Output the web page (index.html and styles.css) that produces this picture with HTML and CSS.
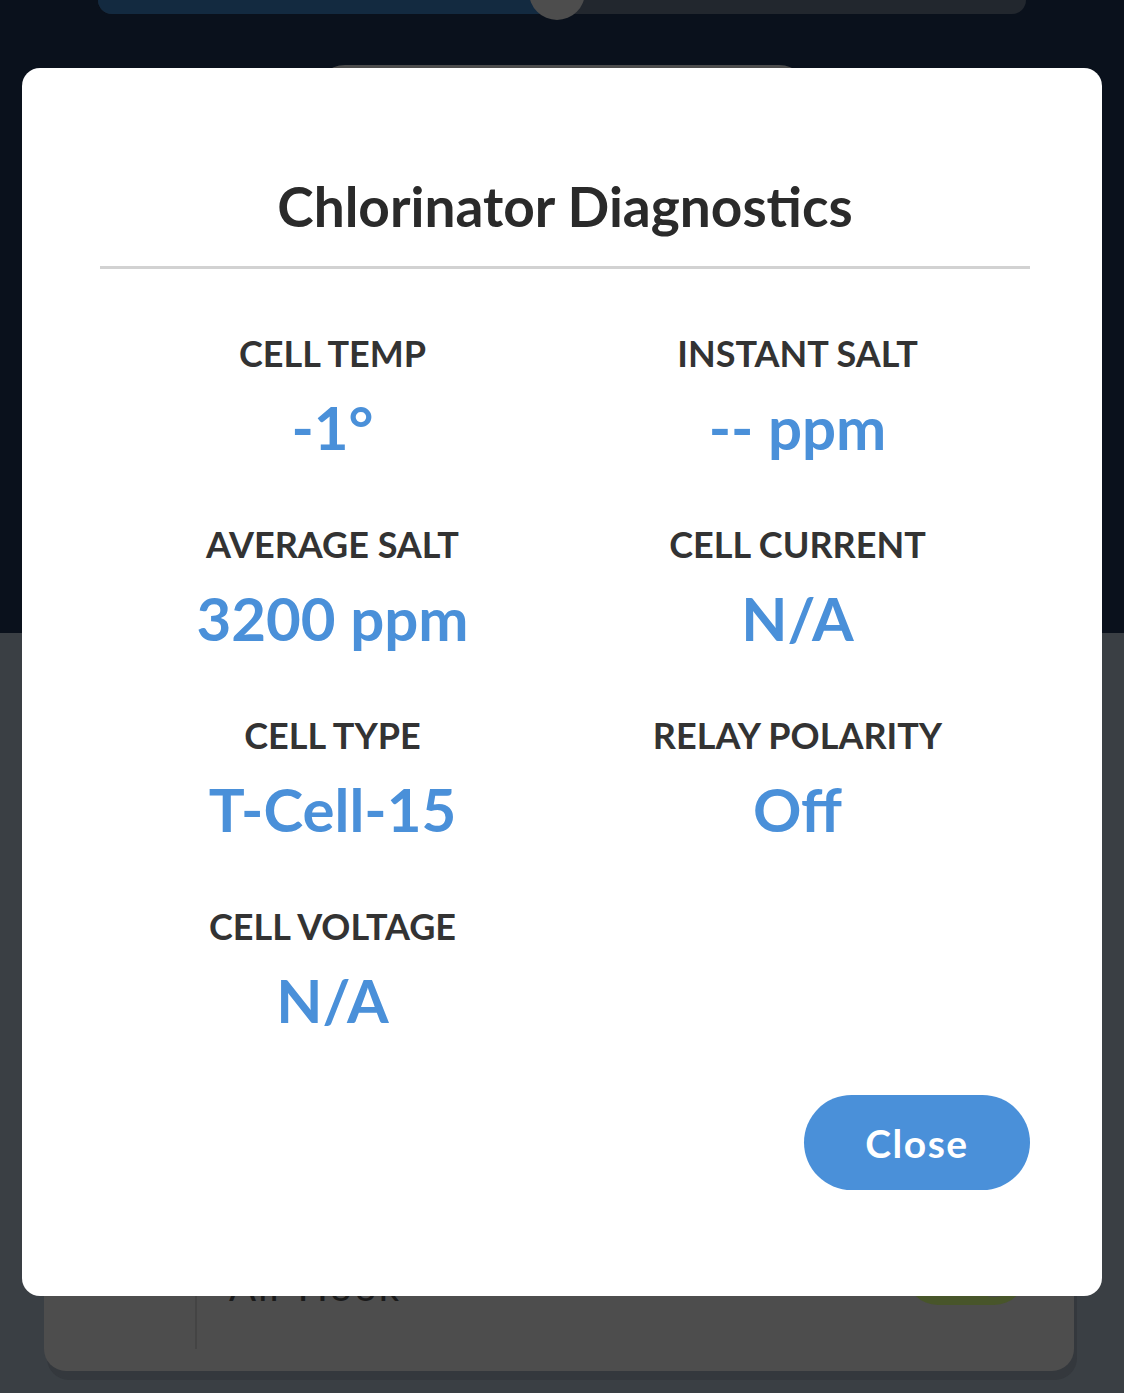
FILE: index.html
```html
<!DOCTYPE html>
<html>
<head>
<meta charset="utf-8">
<link rel="stylesheet" href="styles.css">
</head>
<body>
<div class="page">
  <section class="top">
    <div class="slider">
      <div class="slider-fill"></div>
      <div class="slider-knob"></div>
    </div>
    <div class="pill"></div>
  </section>
  <section class="bottom">
    <div class="card">
      <div class="card-side"></div>
      <div class="card-main">
        <div class="card-title">Air Hook</div>
        <div class="toggle"><span class="toggle-knob"></span></div>
      </div>
    </div>
  </section>
</div>

<div class="modal">
  <h1 class="modal-title">Chlorinator Diagnostics</h1>
  <div class="divider"></div>
  <div class="grid">
    <div class="cell"><div class="label">CELL TEMP</div><div class="value">-1°</div></div>
    <div class="cell"><div class="label">INSTANT SALT</div><div class="value">-- ppm</div></div>
    <div class="cell"><div class="label">AVERAGE SALT</div><div class="value">3200 ppm</div></div>
    <div class="cell"><div class="label">CELL CURRENT</div><div class="value">N/A</div></div>
    <div class="cell"><div class="label">CELL TYPE</div><div class="value">T-Cell-15</div></div>
    <div class="cell"><div class="label">RELAY POLARITY</div><div class="value">Off</div></div>
    <div class="cell"><div class="label">CELL VOLTAGE</div><div class="value">N/A</div></div>
  </div>
  <div class="actions">
    <button class="close-btn">Close</button>
  </div>
</div>
</body>
</html>
```
FILE: styles.css
```css
* { box-sizing: border-box; }
html, body {
  margin: 0;
  padding: 0;
}
body {
  width: 1124px;
  height: 1393px;
  overflow: hidden;
  position: relative;
  font-family: Lato, "Noto Sans", sans-serif;
  background: #3a3f44;
}
.page {
  display: flex;
  flex-direction: column;
  height: 1393px;
}
.top {
  height: 633px;
  background: #0a111c;
  display: flex;
  flex-direction: column;
}
.slider {
  position: relative;
  margin: -14px 98px 0 98px;
  height: 28px;
  border-radius: 14px;
  background: #22272e;
}
.slider-fill {
  width: 459px;
  height: 100%;
  background: #132a40;
  border-radius: 14px 0 0 14px;
}
.slider-knob {
  position: absolute;
  left: 431px;
  top: -22px;
  width: 56px;
  height: 56px;
  border-radius: 50%;
  background: #4d4d4d;
}
.pill {
  margin: 51px 0 0 315px;
  width: 494px;
  height: 60px;
  border-radius: 30px;
  background: #4d4d4d;
}
.bottom {
  flex: 1;
  background: #3a3f44;
  display: flex;
  flex-direction: column;
  justify-content: flex-end;
  padding: 0 0 22px 44px;
}
.card {
  width: 1030px;
  height: 200px;
  background: #4d4d4d;
  border-radius: 22px;
  box-shadow: 3px 9px 0 #34383d;
  display: flex;
}
.card-side {
  width: 153px;
  margin-bottom: 22px;
  border-right: 2px solid #444;
}
.card-main {
  flex: 1;
  display: flex;
  justify-content: space-between;
  align-items: flex-start;
  padding: 0 48px 0 32px;
}
.card-title {
  margin-top: 91px;
  font-size: 40px;
  font-weight: 400;
  color: #1a1a1a;
  letter-spacing: 2px;
  line-height: 48px;
}
.toggle {
  width: 120px;
  height: 64px;
  margin-top: 70px;
  border-radius: 32px;
  background: #48552a;
  position: relative;
}
.toggle-knob {
  position: absolute;
  right: 6px;
  top: 4px;
  width: 52px;
  height: 52px;
  border-radius: 50%;
  background: #4a4a4a;
}
.modal {
  position: absolute;
  left: 22px;
  top: 68px;
  width: 1080px;
  height: 1228px;
  background: #fff;
  border-radius: 18px;
  padding: 107px 72px 0 78px;
  display: flex;
  flex-direction: column;
}
.modal-title {
  margin: 0;
  font-size: 55px;
  line-height: 62px;
  font-weight: 700;
  color: #2a2a2a;
  text-align: center;
}
.divider {
  margin-top: 29px;
  height: 3px;
  background: #d2d2d2;
}
.grid {
  margin-top: 63px;
  display: grid;
  grid-template-columns: 1fr 1fr;
  row-gap: 61px;
}
.cell {
  display: flex;
  flex-direction: column;
  align-items: center;
  text-align: center;
}
.label {
  font-size: 36px;
  line-height: 42px;
  font-weight: 700;
  color: #333;
}
.value {
  margin-top: 18px;
  font-size: 60px;
  line-height: 70px;
  font-weight: 700;
  color: #4a90d9;
}
.actions {
  margin-top: 60px;
  display: flex;
  justify-content: flex-end;
}
.close-btn {
  width: 226px;
  height: 95px;
  border: none;
  border-radius: 48px;
  background: #4a90d9;
  color: #fff;
  font-family: Lato, "Noto Sans", sans-serif;
  font-size: 39px;
  font-weight: 700;
  letter-spacing: 1.5px;
  padding: 0;
}
```
